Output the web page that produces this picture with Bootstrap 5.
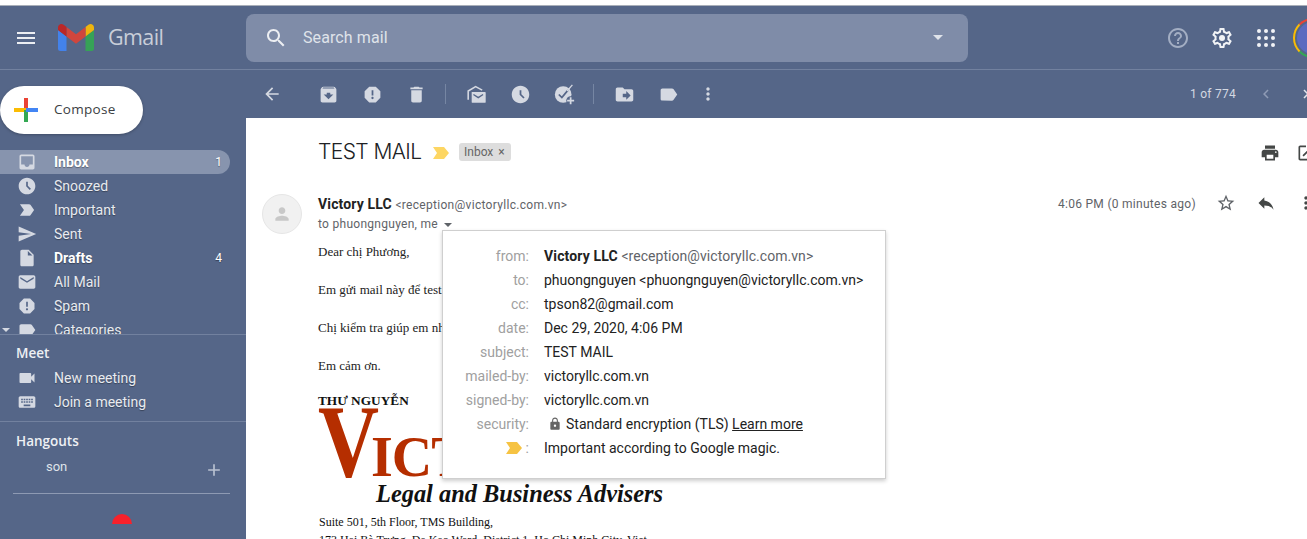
<!DOCTYPE html>
<html lang="en">
<head>
    <meta charset="UTF-8">
    <meta name="viewport" content="width=device-width, initial-scale=1.0">
    <title>TEST MAIL - Gmail</title>
    <link href="https://cdn.jsdelivr.net/npm/bootstrap@5.3.3/dist/css/bootstrap.min.css" rel="stylesheet">
    <style>
        html, body { height: 539px; overflow: hidden; }
        body { background: #fff; font-family: Roboto, sans-serif; font-size: 14px; color: #202124; }
        .top-strip { height: 6px; background: #fff; border-bottom: 1px solid #a9afb9; }
        .gm-shell { width: 1340px; height: 533px; background: #556688; position: relative; }
        .gm-header { height: 64px; border-bottom: 1px solid #72819f; }
        .burger { width: 52px; padding-left: 14px; flex: none; }
        .gm-logo { width: 36px; height: 27px; flex: none; margin-left: 6px; opacity: .92; }
        .gm-word { font-family: "Open Sans", sans-serif; font-size: 21.5px; letter-spacing: -.6px; color: #c9ced9; margin-left: 14px; width: 138px; flex: none; }
        .search-box { width: 722px; height: 48px; margin-top: 8px; margin-bottom: 8px; background: #7f8ca8; border-radius: 8px; color: #dfe3ea; font-size: 16px; padding: 0 25px 0 18px; flex: none; }
        .search-box .placeholder-txt { margin-left: 15px; letter-spacing: .1px; }
        .caret-down { width: 0; height: 0; border-left: 5px solid transparent; border-right: 5px solid transparent; border-top: 5px solid #dfe3ea; }
        .head-icons { margin-left: 198px; gap: 20px; }
        .avatar-ring { width: 40px; height: 40px; border-radius: 50%; margin-left: -5px; border: 2px solid; border-color: #ea4335 transparent #34a853 #fbbc04; padding: 2px; flex: none; }
        .avatar-ring span { display: block; width: 100%; height: 100%; border-radius: 50%; background: #5c6bc0; }
        .gm-side { width: 246px; flex: none; color: #e8ebf0; }
        .compose-btn { width: 143px; height: 48px; margin-top: 16px; background: #fff; border-radius: 24px; color: #3c4043; font-family: "Open Sans", sans-serif; font-weight: 500; font-size: 13.5px; letter-spacing: .3px; padding-left: 14px; padding-bottom: 2px; box-shadow: 0 1px 3px rgba(0,0,0,.25); }
        .compose-btn svg { margin-right: 16px; margin-top: 2px; }
        .side-list { margin-top: 16px; height: 185px; overflow: hidden; border-bottom: 1px solid #72819f; }
        .side-row { height: 24px; width: 230px; padding-left: 17px; padding-right: 8px; border-radius: 0 12px 12px 0; position: relative; text-shadow: 0 1px 1px rgba(0,0,0,.35); }
        .side-row.active { background: #8794ae; }
        .side-row.is-bold { font-weight: 700; color: #fff; }
        .side-row svg { flex: none; margin-right: 17px; }
        .side-count { margin-left: auto; font-size: 12px; font-weight: 400; }
        .cat-caret { position: absolute; left: 2px; top: 10px; border-left: 4px solid transparent; border-right: 4px solid transparent; border-top: 4px solid #d5d9e2; }
        .side-title { font-family: "Open Sans", sans-serif; font-weight: 600; font-size: 13.5px; padding-left: 16px; color: #eef0f4; }
        .meet-box { height: 87px; border-bottom: 1px solid #72819f; padding-top: 8px; }
        .meet-box .side-title { height: 23px; line-height: 21px; }
        .hang-box { padding-top: 9px; }
        .hang-name { font-size: 13px; color: #dfe3ea; padding-left: 46px; margin-top: 6px; height: 36px; padding-right: 22px; line-height: 20px; }
        .hang-name svg { margin-top: 3px; }
        .hang-rule { margin: 0 16px 0 13px; border-top: 1px solid #8e9ab3; }
        .red-dot { width: 20px; height: 10px; background: #f8212b; border-radius: 10px 10px 0 0; margin: 20px 0 0 112px; }
        .gm-main { flex: 1 1 auto; min-width: 0; }
        .gm-tools { height: 48px; }
        .tool-slot { width: 44px; flex: none; display: flex; justify-content: center; }
        .tool-tight { margin-left: -4px; }
        .tool-prev { margin-left: 8px; }
        .tool-sep { width: 1px; height: 20px; background: #7686a3; margin: 0 8px 0 7px; flex: none; }
        .pager { font-size: 12px; letter-spacing: .25px; color: #d3d8e2; margin-left: 460px; width: 46px; white-space: nowrap; }
        .mail-pane { background: #fff; height: 421px; overflow: hidden; }
        .subject-row { height: 67px; padding-left: 72px; padding-top: 21px; }
        .subject-txt { font-family: Inter, sans-serif; font-weight: 300; font-size: 21px; letter-spacing: -.6px; color: #202124; width: 115px; line-height: 26px; white-space: nowrap; }
        .inbox-tag { background: #ddd; color: #666; font-size: 12px; border-radius: 3px; height: 18px; width: 52px; line-height: 18px; padding-left: 5px; margin-left: 10px; white-space: nowrap; }
        .inbox-tag span { margin-left: 2px; }
        .subject-actions { margin-left: 749px; gap: 16px; }
        .sender-row { padding-left: 16px; height: 58px; }
        .sender-pic { width: 40px; height: 40px; border-radius: 50%; background: #f1f1f1; border: 1px solid #e6e6e6; margin-top: 9px; margin-right: 16px; flex: none; display: flex; align-items: center; justify-content: center; }
        .sender-name { font-weight: 700; font-size: 14px; letter-spacing: .15px; color: #222; }
        .sender-addr { font-size: 12px; letter-spacing: .3px; color: #5f6368; }
        .sender-to { font-size: 12px; letter-spacing: .28px; color: #5f6368; line-height: 18px; }
        .sender-to .caret-down { display: inline-block; border-top-color: #5f6368; border-left-width: 4px; border-right-width: 4px; border-top-width: 4px; margin-left: 3px; vertical-align: middle; }
        .sender-info { width: 740px; padding-top: 9px; line-height: 20px; flex: none; }
        .sender-time { font-size: 12px; letter-spacing: .28px; color: #5f6368; width: 138px; white-space: nowrap; padding-top: 9px; line-height: 20px; flex: none; margin-right: 20px; }
        .sender-tools { gap: 20px; padding-top: 8px; flex: none; }
        .mail-body { padding-left: 72px; font-family: "Liberation Serif", serif; font-size: 13px; color: #222; }
        .mail-body p { margin: 0; line-height: 18px; height: 38px; white-space: nowrap; }
        .sign-name { font-weight: 700; font-size: 13.3px; color: #111; line-height: 16px; margin-top: -2px; white-space: nowrap; }
        .logo-victory { color: #b52e00; font-family: "Liberation Serif", serif; line-height: 64px; height: 71px; white-space: nowrap; }
        .logo-victory b { display: inline-block; font-weight: 700; font-size: 103px; transform: scaleX(.82); transform-origin: left; width: 53px; }
        .logo-victory span { font-weight: 700; font-size: 56px; letter-spacing: -1px; }
        .logo-sub { font-weight: 700; font-style: italic; font-size: 24.4px; color: #111; padding-left: 58px; line-height: 28px; white-space: nowrap; }
        .addr-line { font-size: 12px; line-height: 18px; color: #111; padding-left: 1px; white-space: nowrap; }
        .addr-first { margin-top: 5px; }
        .detail-pop { position: absolute; left: 442px; top: 224px; width: 444px; height: 249px; background: #fff; border: 1px solid #cfcfcf; box-shadow: 0 2px 4px rgba(0,0,0,.2); padding: 13px 0 0; display: grid; grid-template-columns: 86px 1fr; column-gap: 15px; grid-auto-rows: 24px; align-items: center; font-size: 14px; z-index: 5; }
        .pop-label { color: #a0a0a0; text-align: right; white-space: nowrap; display: flex; justify-content: flex-end; align-items: center; }
        .pop-value { color: #222; white-space: nowrap; }
        .pop-value .sender-addr { font-size: 14px; letter-spacing: .05px; }
        .pop-value a { color: #222; }
    </style>
</head>
<body>
    <div class="top-strip"></div>
    <div class="gm-shell">
        <!-- barra superior -->
        <div class="gm-header d-flex align-items-center">
            <div class="burger d-flex">
                <svg width="24" height="24" viewBox="0 0 24 24" fill="#eceef2"><path d="M3 18h18v-2H3v2zm0-5h18v-2H3v2zm0-7v2h18V6H3z"/></svg>
            </div>
            <svg class="gm-logo" viewBox="0 0 36 27">
                <path d="M2.500 27h6V12.500L0 6v18.500A2.500 2.500 0 0 0 2.500 27z" fill="#4285f4"/>
                <path d="M27.500 27h6a2.500 2.500 0 0 0 2.500-2.500V6l-8.500 6.500z" fill="#34a853"/>
                <path d="M27.500 3v9.500L36 6V3.500C36 .6 32.700-1 30.400.8z" fill="#fbbc04"/>
                <path d="M8.500 12.500V3L18 10.200 27.500 3v9.500L18 19.700z" fill="#db4437"/>
                <path d="M0 3.500V6l8.500 6.500V3L5.600.8C3.300-1 0 .6 0 3.500z" fill="#c5221f"/>
            </svg>
            <div class="gm-word">Gmail</div>
            <div class="search-box d-flex align-items-center">
                <svg width="24" height="24" viewBox="0 0 24 24" fill="#eceef2"><path d="M15.500 14h-.79l-.28-.27C15.410 12.590 16 11.110 16 9.500 16 5.910 13.090 3 9.500 3S3 5.910 3 9.500 5.910 16 9.500 16c1.610 0 3.090-.59 4.230-1.570l.27.28v.79l5 4.990L20.490 19l-4.990-5zm-6 0C7.010 14 5 11.990 5 9.500S7.010 5 9.500 5 14 7.010 14 9.500 11.990 14 9.500 14z"/></svg>
                <span class="placeholder-txt">Search mail</span>
                <span class="caret-down ms-auto"></span>
            </div>
            <div class="head-icons d-flex align-items-center">
                <svg width="24" height="24" viewBox="0 0 24 24" fill="#a3aec3"><path d="M11 18h2v-2h-2v2zm1-16C6.480 2 2 6.480 2 12s4.480 10 10 10 10-4.480 10-10S17.520 2 12 2zm0 18c-4.410 0-8-3.590-8-8s3.590-8 8-8 8 3.590 8 8-3.590 8-8 8zm0-14c-2.210 0-4 1.790-4 4h2c0-1.100.9-2 2-2s2 .9 2 2c0 2-3 1.750-3 5h2c0-2.250 3-2.500 3-5 0-2.210-1.790-4-4-4z"/></svg>
                <svg width="24" height="24" viewBox="0 0 24 24" fill="#f1f3f6"><path d="M19.430 12.980c.04-.32.07-.64.07-.98 0-.34-.03-.66-.07-.98l2.110-1.650c.19-.15.24-.42.12-.64l-2-3.460c-.09-.16-.26-.25-.44-.25-.06 0-.12.01-.17.03l-2.490 1c-.52-.4-1.080-.73-1.690-.98l-.38-2.650C14.460 2.180 14.250 2 14 2h-4c-.25 0-.46.18-.49.42l-.38 2.650c-.61.25-1.170.59-1.690.98l-2.490-1c-.06-.02-.12-.03-.18-.03-.17 0-.34.09-.43.25l-2 3.460c-.13.22-.07.49.12.64l2.110 1.650c-.04.32-.07.65-.07.98 0 .33.03.66.07.98l-2.110 1.650c-.19.15-.24.42-.12.64l2 3.460c.09.16.26.25.44.25.06 0 .12-.01.17-.03l2.490-1c.52.4 1.080.73 1.690.98l.38 2.650c.03.24.24.42.49.42h4c.25 0 .46-.18.49-.42l.38-2.650c.61-.25 1.170-.59 1.690-.98l2.490 1c.06.02.12.03.18.03.17 0 .34-.09.43-.25l2-3.460c.12-.22.07-.49-.12-.64l-2.110-1.650zm-1.980-1.710c.04.31.05.52.05.73 0 .21-.02.43-.05.73l-.14 1.130.89.7 1.080.84-.7 1.210-1.270-.51-1.040-.42-.9.68c-.43.32-.84.56-1.250.73l-1.060.43-.16 1.130-.2 1.350h-1.400l-.19-1.350-.16-1.130-1.060-.43c-.43-.18-.83-.41-1.230-.71l-.91-.7-1.060.43-1.270.51-.7-1.210 1.080-.84.89-.7-.14-1.130c-.03-.31-.05-.54-.05-.74s.02-.43.05-.73l.14-1.130-.89-.7-1.080-.84.7-1.210 1.270.51 1.040.42.9-.68c.43-.32.84-.56 1.250-.73l1.060-.43.16-1.130.2-1.350h1.390l.19 1.350.16 1.130 1.060.43c.43.18.83.41 1.230.71l.91.7 1.060-.43 1.270-.51.7 1.210-1.070.85-.89.7.14 1.130z"/><circle cx="12" cy="12" r="3"/></svg>
                <svg width="24" height="24" viewBox="0 0 24 24" fill="#f1f3f6"><circle cx="5" cy="5" r="2"/><circle cx="12" cy="5" r="2"/><circle cx="19" cy="5" r="2"/><circle cx="5" cy="12" r="2"/><circle cx="12" cy="12" r="2"/><circle cx="19" cy="12" r="2"/><circle cx="5" cy="19" r="2"/><circle cx="12" cy="19" r="2"/><circle cx="19" cy="19" r="2"/></svg>
                <div class="avatar-ring"><span></span></div>
            </div>
        </div>

        <div class="d-flex">
            <!-- menu lateral -->
            <div class="gm-side">
                <div class="compose-btn d-flex align-items-center">
                    <svg width="24" height="24" viewBox="0 0 24 24"><rect x="10" y="0" width="4" height="12" fill="#ea4335"/><rect x="0" y="10" width="12" height="4" fill="#fbbc04"/><rect x="10" y="12" width="4" height="12" fill="#34a853"/><rect x="12" y="10" width="12" height="4" fill="#4285f4"/></svg>
                    Compose
                </div>
                <div class="side-list">
                    <div class="side-row active is-bold d-flex align-items-center">
                        <svg width="20" height="20" viewBox="0 0 24 24" fill="#d5d9e2"><path d="M19 3H5c-1.100 0-2 .9-2 2v14c0 1.100.9 2 2 2h14c1.100 0 2-.9 2-2V5c0-1.100-.9-2-2-2zm0 12h-4c0 1.660-1.340 3-3 3s-3-1.340-3-3H5V5h14v10z"/></svg>
                        Inbox<span class="side-count">1</span>
                    </div>
                    <div class="side-row d-flex align-items-center">
                        <svg width="20" height="20" viewBox="0 0 24 24" fill="#d5d9e2"><path d="M11.990 2C6.470 2 2 6.480 2 12s4.470 10 9.990 10C17.520 22 22 17.520 22 12S17.520 2 11.990 2zm3.300 14.710L11 12.410V7h2v4.590l3.710 3.710-1.420 1.410z"/></svg>
                        Snoozed
                    </div>
                    <div class="side-row d-flex align-items-center">
                        <svg width="20" height="20" viewBox="0 0 24 24" fill="#d5d9e2"><path d="M3.500 18.990l11 .01c.67 0 1.270-.33 1.630-.84L20.500 12l-4.370-6.160c-.36-.51-.96-.84-1.630-.84l-11 .01L8.340 12 3.500 18.990z"/></svg>
                        Important
                    </div>
                    <div class="side-row d-flex align-items-center">
                        <svg width="20" height="20" viewBox="0 0 24 24" fill="#d5d9e2"><path d="M2.010 21L23 12 2.010 3 2 10l15 2-15 2z"/></svg>
                        Sent
                    </div>
                    <div class="side-row is-bold d-flex align-items-center">
                        <svg width="20" height="20" viewBox="0 0 24 24" fill="#d5d9e2"><path d="M6 2c-1.100 0-1.990.9-1.990 2L4 20c0 1.100.89 2 1.990 2H18c1.100 0 2-.9 2-2V8l-6-6H6zm7 7V3.500L18.500 9H13z"/></svg>
                        Drafts<span class="side-count">4</span>
                    </div>
                    <div class="side-row d-flex align-items-center">
                        <svg width="20" height="20" viewBox="0 0 24 24" fill="#d5d9e2"><path d="M20 4H4c-1.100 0-1.990.9-1.990 2L2 18c0 1.100.9 2 2 2h16c1.100 0 2-.9 2-2V6c0-1.100-.9-2-2-2zm0 4l-8 5-8-5V6l8 5 8-5v2z"/></svg>
                        All Mail
                    </div>
                    <div class="side-row d-flex align-items-center">
                        <svg width="20" height="20" viewBox="0 0 24 24" fill="#d5d9e2"><path d="M15.730 3H8.270L3 8.270v7.460L8.270 21h7.460L21 15.730V8.270L15.730 3zM12 17.300c-.72 0-1.300-.58-1.300-1.300 0-.72.58-1.300 1.300-1.300.72 0 1.300.58 1.300 1.300 0 .72-.58 1.300-1.300 1.300zm1-4.300h-2V7h2v6z"/></svg>
                        Spam
                    </div>
                    <div class="side-row d-flex align-items-center">
                        <span class="cat-caret"></span>
                        <svg width="20" height="20" viewBox="0 0 24 24" fill="#d5d9e2"><path d="M17.630 5.840C17.270 5.330 16.670 5 16 5L5 5.010C3.900 5.010 3 5.900 3 7v10c0 1.100.9 1.990 2 1.990L16 19c.67 0 1.270-.33 1.630-.84L22 12l-4.370-6.160z"/></svg>
                        Categories
                    </div>
                </div>
                <div class="meet-box">
                    <div class="side-title">Meet</div>
                    <div class="side-row d-flex align-items-center">
                        <svg width="20" height="20" viewBox="0 0 24 24" fill="#d5d9e2"><path d="M17 10.500V7c0-.55-.45-1-1-1H4c-.55 0-1 .45-1 1v10c0 .55.45 1 1 1h12c.55 0 1-.45 1-1v-3.500l4 4v-11l-4 4z"/></svg>
                        New meeting
                    </div>
                    <div class="side-row d-flex align-items-center">
                        <svg width="20" height="20" viewBox="0 0 24 24" fill="#d5d9e2"><path d="M20 5H4c-1.100 0-1.990.9-1.990 2L2 17c0 1.100.9 2 2 2h16c1.100 0 2-.9 2-2V7c0-1.100-.9-2-2-2zm-9 3h2v2h-2V8zm0 3h2v2h-2v-2zM8 8h2v2H8V8zm0 3h2v2H8v-2zm-1 2H5v-2h2v2zm0-3H5V8h2v2zm9 7H8v-2h8v2zm0-4h-2v-2h2v2zm0-3h-2V8h2v2zm3 3h-2v-2h2v2zm0-3h-2V8h2v2z"/></svg>
                        Join a meeting
                    </div>
                </div>
                <div class="hang-box">
                    <div class="side-title">Hangouts</div>
                    <div class="hang-name d-flex align-items-start justify-content-between">
                        <span>son</span>
                        <svg width="20" height="20" viewBox="0 0 24 24" fill="#b9c1d1"><path d="M19 13h-6v6h-2v-6H5v-2h6V5h2v6h6v2z"/></svg>
                    </div>
                    <div class="hang-rule"></div>
                    <div class="red-dot"></div>
                </div>
            </div>

            <div class="gm-main">
                <!-- barra de acciones -->
                <div class="gm-tools d-flex align-items-center">
                    <div class="tool-slot ms-1 me-2"><svg width="20" height="20" viewBox="0 0 24 24" fill="#d5d9e2"><path d="M20 11H7.830l5.590-5.590L12 4l-8 8 8 8 1.410-1.410L7.830 13H20v-2z"/></svg></div>
                    <div class="tool-slot ms-1"><svg width="21" height="21" viewBox="0 0 24 24" fill="#d5d9e2"><path d="M20.540 5.230l-1.390-1.680C18.880 3.210 18.470 3 18 3H6c-.47 0-.88.21-1.160.55L3.460 5.230C3.170 5.570 3 6.020 3 6.500V19c0 1.100.9 2 2 2h14c1.100 0 2-.9 2-2V6.500c0-.48-.17-.93-.46-1.270zM12 17.500L6.500 12H10v-2h4v2h3.500L12 17.500zM5.120 5l.81-1h12l.94 1H5.120z"/></svg></div>
                    <div class="tool-slot"><svg width="21" height="21" viewBox="0 0 24 24" fill="#d5d9e2"><path d="M15.730 3H8.270L3 8.270v7.460L8.270 21h7.460L21 15.730V8.270L15.730 3zM12 17.300c-.72 0-1.300-.58-1.300-1.300 0-.72.58-1.300 1.300-1.300.72 0 1.300.58 1.300 1.300 0 .72-.58 1.300-1.300 1.300zm1-4.300h-2V7h2v6z"/></svg></div>
                    <div class="tool-slot"><svg width="21" height="21" viewBox="0 0 24 24" fill="#d5d9e2"><path d="M6 19c0 1.100.9 2 2 2h8c1.100 0 2-.9 2-2V7H6v12zM19 4h-3.500l-1-1h-5l-1 1H5v2h14V4z"/></svg></div>
                    <div class="tool-sep"></div>
                    <div class="tool-slot"><svg width="21" height="21" viewBox="0 0 24 24"><path d="M2.500 18V8L11 3l7.500 4" fill="none" stroke="#d5d9e2" stroke-width="1.800"/><path d="M6.500 9h15a1 1 0 0 1 1 1v10.500a1 1 0 0 1-1 1h-14a1 1 0 0 1-1-1z" fill="#d5d9e2"/><path d="M8.500 12l5.500 3.500 5.500-3.500" fill="none" stroke="#556688" stroke-width="1.600"/></svg></div>
                    <div class="tool-slot"><svg width="21" height="21" viewBox="0 0 24 24" fill="#d5d9e2"><path d="M11.990 2C6.470 2 2 6.480 2 12s4.470 10 9.990 10C17.520 22 22 17.520 22 12S17.520 2 11.990 2zm3.300 14.710L11 12.410V7h2v4.590l3.710 3.710-1.420 1.410z"/></svg></div>
                    <div class="tool-slot"><svg width="21" height="21" viewBox="0 0 24 24"><circle cx="10.500" cy="12" r="9.500" fill="#d5d9e2"/><path d="M5.500 12l3.500 3.500 7-8.500" fill="none" stroke="#556688" stroke-width="2"/><path d="M15 8l6-7" fill="none" stroke="#d5d9e2" stroke-width="1.500"/><circle cx="19" cy="19" r="5" fill="#556688"/><path d="M18 15h2v3h3v2h-3v3h-2v-3h-3v-2h3z" fill="#d5d9e2"/></svg></div>
                    <div class="tool-sep"></div>
                    <div class="tool-slot"><svg width="21" height="21" viewBox="0 0 24 24" fill="#d5d9e2"><path d="M20 6h-8l-2-2H4c-1.100 0-1.990.9-1.990 2L2 18c0 1.100.9 2 2 2h16c1.100 0 2-.9 2-2V8c0-1.100-.9-2-2-2zm-6 12v-3h-4v-4h4V8l5 5-5 5z"/></svg></div>
                    <div class="tool-slot"><svg width="21" height="21" viewBox="0 0 24 24" fill="#d5d9e2"><path d="M17.630 5.840C17.270 5.330 16.670 5 16 5L5 5.010C3.900 5.010 3 5.900 3 7v10c0 1.100.9 1.990 2 1.990L16 19c.67 0 1.270-.33 1.630-.84L22 12l-4.370-6.160z"/></svg></div>
                    <div class="tool-slot tool-tight"><svg width="20" height="20" viewBox="0 0 24 24" fill="#d5d9e2"><path d="M12 8c1.100 0 2-.9 2-2s-.9-2-2-2-2 .9-2 2 .9 2 2 2zm0 2c-1.100 0-2 .9-2 2s.9 2 2 2 2-.9 2-2-.9-2-2-2zm0 6c-1.100 0-2 .9-2 2s.9 2 2 2 2-.9 2-2-.9-2-2-2z"/></svg></div>
                    <div class="pager">1 of 774</div>
                    <div class="tool-slot tool-prev"><svg width="18" height="18" viewBox="0 0 24 24" fill="#8f9bb5"><path d="M15.410 7.410L14 6l-6 6 6 6 1.410-1.410L10.830 12z"/></svg></div>
                    <div class="tool-slot tool-tight"><svg width="18" height="18" viewBox="0 0 24 24" fill="#e3e6ec"><path d="M10 6L8.590 7.410 13.170 12l-4.580 4.590L10 18l6-6z"/></svg></div>
                </div>

                <!-- correo -->
                <div class="mail-pane">
                    <div class="subject-row d-flex align-items-start">
                        <div class="subject-txt">TEST MAIL</div>
                        <svg width="16" height="12" viewBox="0 0 16 12" fill="#fdd663" class="mt-2"><path d="M0 12h11l5-6-5-6H0l4 6z"/></svg>
                        <div class="inbox-tag mt-1">Inbox <span>&times;</span></div>
                        <div class="subject-actions d-flex">
                            <svg width="20" height="20" viewBox="0 0 24 24" fill="#444746" class="mt-1"><path d="M19 8H5c-1.660 0-3 1.340-3 3v6h4v4h12v-4h4v-6c0-1.660-1.340-3-3-3zm-3 11H8v-5h8v5zm3-7c-.55 0-1-.45-1-1s.45-1 1-1 1 .45 1 1-.45 1-1 1zm-1-9H6v4h12V3z"/></svg>
                            <svg width="20" height="20" viewBox="0 0 24 24" fill="#444746" class="mt-1"><path d="M19 19H5V5h7V3H5c-1.110 0-2 .9-2 2v14c0 1.100.89 2 2 2h14c1.100 0 2-.9 2-2v-7h-2v7zM14 3v2h3.590l-9.830 9.830 1.410 1.410L19 6.410V10h2V3h-7z"/></svg>
                        </div>
                    </div>
                    <div class="sender-row d-flex">
                        <div class="sender-pic">
                            <svg width="20" height="20" viewBox="0 0 24 24" fill="#c8c8c8"><path d="M12 12c2.210 0 4-1.790 4-4s-1.790-4-4-4-4 1.790-4 4 1.790 4 4 4zm0 2c-2.670 0-8 1.340-8 4v2h16v-2c0-2.660-5.330-4-8-4z"/></svg>
                        </div>
                        <div class="sender-info">
                            <div><span class="sender-name">Victory LLC</span> <span class="sender-addr">&lt;reception@victoryllc.com.vn&gt;</span></div>
                            <div class="sender-to">to phuongnguyen, me <span class="caret-down"></span></div>
                        </div>
                        <div class="sender-time">4:06 PM (0 minutes ago)</div>
                        <div class="sender-tools d-flex">
                            <svg width="20" height="20" viewBox="0 0 24 24" fill="#5f6368"><path d="M22 9.240l-7.190-.62L12 2 9.190 8.630 2 9.240l5.460 4.730L5.820 21 12 17.270 18.180 21l-1.630-7.030L22 9.240zM12 15.400l-3.760 2.270 1-4.280-3.320-2.880 4.380-.38L12 6.100l1.710 4.040 4.380.38-3.320 2.880 1 4.280L12 15.400z"/></svg>
                            <svg width="20" height="20" viewBox="0 0 24 24" fill="#444746"><path d="M10 9V5l-7 7 7 7v-4.100c5 0 8.500 1.600 11 5.100-1-5-4-10-11-11z"/></svg>
                            <svg width="20" height="20" viewBox="0 0 24 24" fill="#444746"><path d="M12 8c1.100 0 2-.9 2-2s-.9-2-2-2-2 .9-2 2 .9 2 2 2zm0 2c-1.100 0-2 .9-2 2s.9 2 2 2 2-.9 2-2-.9-2-2-2zm0 6c-1.100 0-2 .9-2 2s.9 2 2 2 2-.9 2-2-.9-2-2-2z"/></svg>
                        </div>
                    </div>
                    <div class="mail-body">
                        <p>Dear chị Phương,</p>
                        <p>Em gửi mail này để test</p>
                        <p>Chị kiểm tra giúp em nhé</p>
                        <p>Em cảm ơn.</p>
                        <div class="sign-name">THƯ NGUYỄN</div>
                        <div class="logo-victory"><b>V</b><span>ICTORY</span></div>
                        <div class="logo-sub">Legal and Business Advisers</div>
                        <div class="addr-line addr-first">Suite 501, 5th Floor, TMS Building,</div>
                        <div class="addr-line">173 Hai Bà Trưng, Đa Kao Ward, District 1, Ho Chi Minh City, Viet</div>
                    </div>
                </div>
            </div>
        </div>

        <!-- detalles del remitente -->
        <div class="detail-pop">
            <div class="pop-label">from:</div><div class="pop-value"><span class="sender-name">Victory LLC</span> <span class="sender-addr">&lt;reception@victoryllc.com.vn&gt;</span></div>
            <div class="pop-label">to:</div><div class="pop-value">phuongnguyen &lt;phuongnguyen@victoryllc.com.vn&gt;</div>
            <div class="pop-label">cc:</div><div class="pop-value">tpson82@gmail.com</div>
            <div class="pop-label">date:</div><div class="pop-value">Dec 29, 2020, 4:06 PM</div>
            <div class="pop-label">subject:</div><div class="pop-value">TEST MAIL</div>
            <div class="pop-label">mailed-by:</div><div class="pop-value">victoryllc.com.vn</div>
            <div class="pop-label">signed-by:</div><div class="pop-value">victoryllc.com.vn</div>
            <div class="pop-label">security:</div><div class="pop-value d-flex align-items-center"><svg width="14" height="14" viewBox="0 0 24 24" fill="#666" class="ms-1 me-1"><path d="M18 8h-1V6c0-2.760-2.240-5-5-5S7 3.240 7 6v2H6c-1.100 0-2 .9-2 2v10c0 1.100.9 2 2 2h12c1.100 0 2-.9 2-2V10c0-1.100-.9-2-2-2zm-6 9c-1.100 0-2-.9-2-2s.9-2 2-2 2 .9 2 2-.9 2-2 2zm3.100-9H8.900V6c0-1.710 1.390-3.100 3.100-3.100 1.710 0 3.100 1.390 3.100 3.100v2z"/></svg>Standard encryption (TLS)&nbsp;<a href="#">Learn more</a></div>
            <div class="pop-label"><svg width="16" height="12" viewBox="0 0 16 12" fill="#f6c343" class="me-1"><path d="M0 12h11l5-6-5-6H0l4 6z"/></svg>:</div><div class="pop-value">Important according to Google magic.</div>
        </div>
    </div>

    <script src="https://cdn.jsdelivr.net/npm/bootstrap@5.3.3/dist/js/bootstrap.bundle.min.js"></script>
</body>
</html>
